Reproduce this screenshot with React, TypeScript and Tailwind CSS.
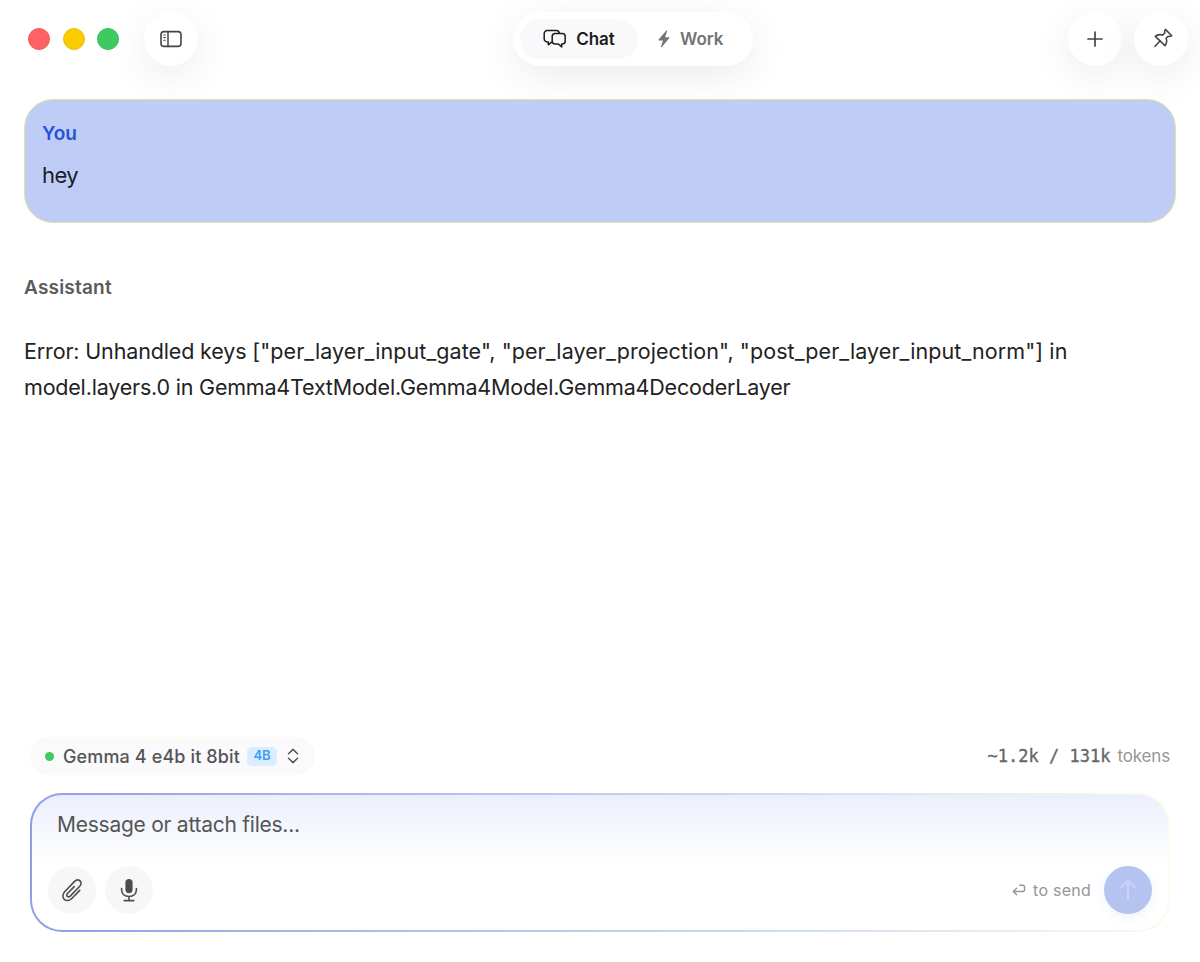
import React from 'react';

interface IconProps {
  className?: string;
}

const SidebarIcon: React.FC<IconProps> = ({ className }) => (
  <svg viewBox="0 0 22 18" className={className} fill="none" stroke="currentColor" strokeLinecap="round">
    <rect x="1" y="1.6" width="20" height="14.8" rx="3" strokeWidth="1.6" />
    <path d="M8 1.6v14.8" strokeWidth="1.5" />
    <path d="M3.8 5h1.5M3.8 7.6h1.5M3.8 10.2h1.5" strokeWidth="1.1" />
  </svg>
);

const ChatIcon: React.FC<IconProps> = ({ className }) => (
  <svg viewBox="0 0 24 20" className={className} fill="none" stroke="currentColor" strokeWidth="1.5" strokeLinejoin="round" strokeLinecap="round">
    <path d="M8.6 13.2l-3.3 2.6v-2.9H4.2A3 3 0 0 1 1.2 9.9V4.6a3 3 0 0 1 3-3h9.2a3 3 0 0 1 2.9 2.4" />
    <path d="M12.2 4.6h7a3 3 0 0 1 3 3v4.4a3 3 0 0 1-3 3h-.5v2.9l-3.4-2.9h-3.1a3 3 0 0 1-3-3V7.6a3 3 0 0 1 3-3z" />
  </svg>
);

const BoltIcon: React.FC<IconProps> = ({ className }) => (
  <svg viewBox="0 0 12 18" className={className} fill="currentColor">
    <path d="M8.2.7L.6 9.6c-.3.4-.1.8.4.8h4L3 16.6c-.2.7.4 1 .9.5l7.4-9c.3-.4.1-.8-.4-.8H7L9.1 1.3c.2-.7-.4-1.1-.9-.6z" />
  </svg>
);

const PinIcon: React.FC<IconProps> = ({ className }) => (
  <svg viewBox="0 0 20 20" className={className} fill="none" stroke="currentColor" strokeWidth="1.6" strokeLinejoin="round" strokeLinecap="round">
    <path d="M12.4 1.4l6.300 6.300c-1.200.9-2.400 1-3.600.6l-2 2c1 2.600.600 5.400-1.100 7.300L2.300 8.400c1.900-1.900 4.600-2.200 7.200-1.300l2.300-2.100c-.5-1.300-.3-2.500.6-3.600z" />
    <path d="M7 13L2 18.300" />
  </svg>
);

const PaperclipIcon: React.FC<IconProps> = ({ className }) => (
  <svg viewBox="0 0 22 24" className={className} fill="none" stroke="currentColor" strokeWidth="1.6" strokeLinecap="round" strokeLinejoin="round">
    <path d="M18.700 12.400l-7.900 8.100c-2.300 2.300-5.500 2.600-7.500.8-2-1.900-1.900-5.100.4-7.500l9.900-10.400c1.600-1.600 3.900-1.900 5.400-.5 1.500 1.400 1.300 3.700-.3 5.400l-9.500 9.800c-.9.9-2.100 1-2.900.3-.8-.8-.7-2 .2-2.900l6.700-6.900" />
  </svg>
);

const MicIcon: React.FC<IconProps> = ({ className }) => (
  <svg viewBox="0 0 18 24" className={className} fill="none" stroke="currentColor" strokeWidth="1.6" strokeLinecap="round">
    <rect x="5.400" y="1" width="7.200" height="14" rx="3.600" fill="currentColor" stroke="none" />
    <path d="M1.600 10.500v1.300c0 4.100 3 6.700 7.400 6.700s7.400-2.600 7.400-6.700v-1.300M9 18.500v3.900M4.200 22.600h9.600" />
  </svg>
);

const ReturnIcon: React.FC<IconProps> = ({ className }) => (
  <svg viewBox="0 0 14 12" className={className} fill="none" stroke="currentColor" strokeWidth="1.400" strokeLinecap="round" strokeLinejoin="round">
    <path d="M4.600 4.200L1.200 7.500l3.400 3.300M1.400 7.500h9.200a2 2 0 0 0 2-2V3.200a2 2 0 0 0-2-2H7.800" />
  </svg>
);

const roundButton =
  'flex size-[54px] items-center justify-center rounded-full bg-white text-[#454545] shadow-[0_10px_38px_rgba(0,0,0,0.08)]';

const App: React.FC = () => {
  return (
    <div className="flex h-[962px] w-[1200px] flex-col overflow-hidden bg-white font-['Inter','Liberation_Sans',sans-serif] text-[#222]">
      {/* Title bar */}
      <header className="flex h-[99px] shrink-0 items-start justify-between pt-3 pr-3 pl-7">
        <div className="flex w-[485px] items-center">
          <div className="flex gap-[12.5px]">
            <span className="size-[22px] rounded-full border border-[#f2555a] bg-[#ff6167]" />
            <span className="size-[22px] rounded-full border border-[#efc000] bg-[#fbcb02]" />
            <span className="size-[22px] rounded-full border border-[#35bd58] bg-[#3fca61]" />
          </div>
          <button aria-label="Toggle sidebar" className={`ml-[25px] ${roundButton}`}>
            <SidebarIcon className="h-[18px] w-[22px]" />
          </button>
        </div>

        <div className="flex h-[54px] w-[240px] items-center rounded-full bg-white px-[7px] shadow-[0_10px_38px_rgba(0,0,0,0.08)]">
          <button className="flex h-10 w-[118px] items-center justify-center gap-[9px] rounded-full bg-[#f9f9fb] text-[17px] font-semibold text-[#1c1c1c]">
            <ChatIcon className="h-5 w-6" />
            <span className="pt-[2px]">Chat</span>
          </button>
          <button className="ml-[20px] flex items-center gap-[10px] text-[17px] font-semibold text-[#737373]">
            <BoltIcon className="h-[18px] w-3" />
            <span className="pt-[2px]">Work</span>
          </button>
        </div>

        <div className="flex w-[435px] justify-end gap-3">
          <button aria-label="New chat" className={roundButton}>
            <svg viewBox="0 0 16 16" className="size-4" stroke="currentColor" strokeWidth="1.7" strokeLinecap="round">
              <path d="M8 1v14M1 8h14" />
            </svg>
          </button>
          <button aria-label="Pin window" className={`pb-[2px] pl-[3px] ${roundButton}`}>
            <PinIcon className="size-5" />
          </button>
        </div>
      </header>

      {/* Conversation */}
      <main className="flex flex-1 flex-col px-6">
        <section className="h-[124px] rounded-[29px] border border-[#d8e8a0] bg-[#bfccf5] px-[17px] pt-[21px]">
          <h2 className="text-[19px] leading-[26px] font-semibold text-[#2553d6]">You</h2>
          <p className="mt-3 text-[22px] leading-[32px] tracking-[-0.6px] text-[#171c2b]">hey</p>
        </section>
        <section className="mt-[52px]">
          <h2 className="text-[19px] leading-[26px] font-semibold tracking-[0.2px] text-[#5b5b5b]">Assistant</h2>
          <p className="mt-8 text-[21.5px] leading-[36px] whitespace-nowrap">
            <span className="tracking-[-0.15px]">Error: Unhandled keys </span>
            <span className="tracking-[0.08px]">["per_layer_input_gate", "per_layer_projection", "post_per_layer_input_norm"] in</span>
            <br />
            <span className="tracking-[-0.2px]">model.layers.0 in Gemma4TextModel.Gemma4Model.Gemma4DecoderLayer</span>
          </p>
        </section>
      </main>

      {/* Composer */}
      <footer className="flex shrink-0 flex-col px-[30px] pb-[30px]">
        <div className="flex h-[38px] items-center justify-between">
          <button className="flex h-[38px] w-[285px] items-center rounded-full border border-[#fbfbec] bg-[#fafafc] pl-[14px] text-[#555]">
            <span className="size-[9px] rounded-full bg-[#3fc95f]" />
            <span className="ml-[9px] text-[18px] font-medium tracking-[0.13px] whitespace-nowrap">Gemma 4 e4b it 8bit</span>
            <span className="ml-[7px] flex h-[19px] w-[30px] items-center justify-center rounded-[5px] bg-[#d9edfd] text-[13px] font-semibold text-[#3d9df5]">4B</span>
            <svg viewBox="0 0 12 16" className="ml-[10px] h-4 w-3" fill="none" stroke="currentColor" strokeWidth="1.5" strokeLinecap="round" strokeLinejoin="round">
              <path d="M1.500 5.700L6 1.400l4.500 4.300M1.500 10.300L6 14.600l4.500-4.300" />
            </svg>
          </button>
          <div className="flex items-baseline pt-[2px] text-[17px] whitespace-pre">
            <span className="font-['DejaVu_Sans_Mono',monospace] text-[#666] [-webkit-text-stroke:0.35px_#666]">~1.2k / 131k</span>
            <span className="ml-[7px] tracking-[-0.15px] text-[#969696]">tokens</span>
          </div>
        </div>

        <div className="mt-[18px] h-[139px] rounded-[32px] bg-linear-to-r from-[#8f9fe6] via-[#bccff0] to-[#fbfbee] p-[2px]">
          <div className="flex h-full flex-col justify-between rounded-[30px] bg-white bg-linear-to-b from-[#ebeffc] to-white to-50% pt-[14px] pr-4 pb-4 pl-4">
            <p className="pl-[9px] text-[21px] leading-[32px] tracking-[-0.25px] text-[#555]">Message or attach files...</p>
            <div className="flex items-center">
              <button aria-label="Attach file" className="flex size-12 items-center justify-center rounded-full border border-[#f9f9ef] bg-[#f6f7f9] text-[#4d4d4d]">
                <PaperclipIcon className="h-6 w-[22px]" />
              </button>
              <button aria-label="Dictate" className="ml-[9px] flex size-12 items-center justify-center rounded-full border border-[#f9f9ef] bg-[#f6f7f9] text-[#4d4d4d]">
                <MicIcon className="h-6 w-[18px]" />
              </button>
              <span className="ml-auto flex items-center gap-[7px] text-[16px] tracking-[0.25px] text-[#969696]">
                <ReturnIcon className="h-3 w-[14px]" />
                to send
              </span>
              <button aria-label="Send" className="ml-[13px] flex size-12 items-center justify-center rounded-full bg-[#b5c3f1] text-[#c9d4f7] shadow-[0_3px_12px_rgba(100,130,230,0.1)]">
                <svg viewBox="0 0 16 22" className="h-[22px] w-4" fill="none" stroke="currentColor" strokeWidth="2" strokeLinecap="round" strokeLinejoin="round">
                  <path d="M8 20.500V1.500M1.500 8.200L8 1.500l6.500 6.700" />
                </svg>
              </button>
            </div>
          </div>
        </div>
      </footer>
    </div>
  );
};

export default App;
